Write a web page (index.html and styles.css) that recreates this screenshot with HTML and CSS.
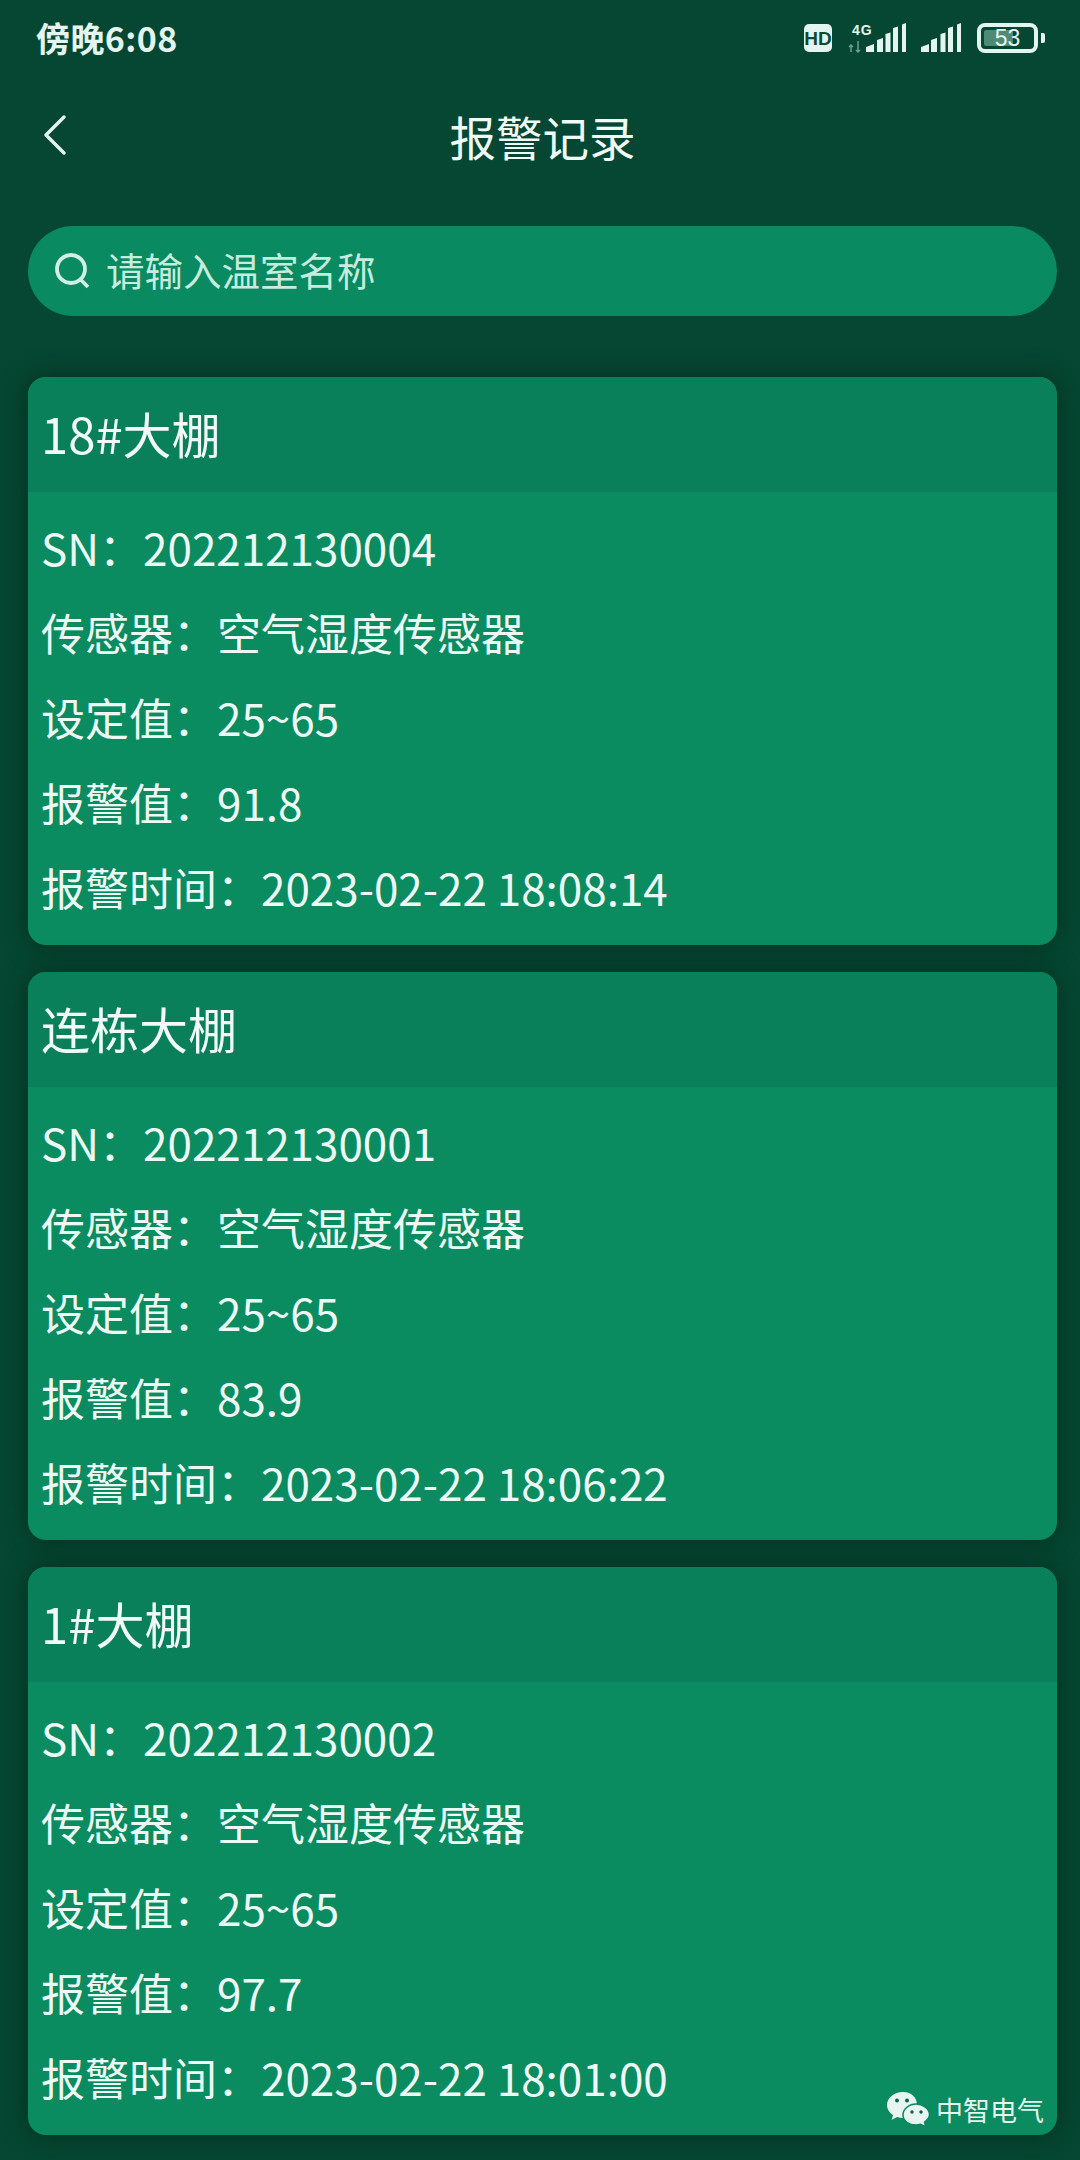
FILE: index.html
```html
<!DOCTYPE html>
<html lang="zh">
<head>
<meta charset="utf-8">
<title>报警记录</title>
<link rel="stylesheet" href="styles.css">
</head>
<body>
<div class="screen">
  <div class="status">
    <span class="clock">傍晚6:08</span>
    <div class="status-icons">
      <svg class="hd" width="28" height="28" viewBox="0 0 28 28"><rect width="28" height="28" rx="5" fill="#e3f5ee"/><text x="14" y="20.500" text-anchor="middle" class="hd-text">HD</text></svg>
      <svg class="sig4g" width="58" height="30" viewBox="0 0 58 30">
        <text x="3" y="12" class="g-text">4G</text>
        <path d="M2 22v7M0 24l2-2 2 2M9 18v11M7 27l2 2 2-2" stroke="#6f9d8c" stroke-width="1.500" fill="none"/>
        <path d="M17 29v-5l8-3v8zM28 29v-12l6-2v14zM36.500 29v-18l5-1.500V29zM44 29v-24l5-1.500V29zM53 29V1.500L57 0v29z" fill="#e3f5ee"/>
      </svg>
      <svg class="sig" width="41" height="30" viewBox="0 0 41 30">
        <path d="M0 29v-5l8-3v8zM10 29v-12l6-2v14zM19.500 29v-18l5-1.500V29zM27 29v-24l5-1.500V29zM36 29V1.500L40 0v29z" fill="#e3f5ee"/>
      </svg>
      <div class="battery">
        <div class="battery-body"><div class="battery-fill"></div><span class="battery-num">53</span></div>
        <div class="battery-cap"></div>
      </div>
    </div>
  </div>

  <div class="nav">
    <svg class="back" width="24" height="40" viewBox="0 0 24 40"><path d="M21 2 3 20l18 18" fill="none" stroke="#e3f5ee" stroke-width="3.400" stroke-linecap="round" stroke-linejoin="round"/></svg>
    <h1 class="nav-title">报警记录</h1>
  </div>

  <div class="search">
    <svg class="search-icon" width="36" height="36" viewBox="0 0 36 36"><circle cx="16" cy="16" r="14" fill="none" stroke="#d2efe5" stroke-width="3.800"/><path d="m25 26 8 8" stroke="#d2efe5" stroke-width="3.800"/></svg>
    <span class="search-text">请输入温室名称</span>
  </div>

  <div class="list">
    <section class="card">
      <h2 class="card-head">18#大棚</h2>
      <div class="card-body">
        <p class="row">SN：202212130004</p>
        <p class="row">传感器：空气湿度传感器</p>
        <p class="row">设定值：25~65</p>
        <p class="row">报警值：91.8</p>
        <p class="row">报警时间：2023-02-22 18:08:14</p>
      </div>
    </section>
    <section class="card">
      <h2 class="card-head">连栋大棚</h2>
      <div class="card-body">
        <p class="row">SN：202212130001</p>
        <p class="row">传感器：空气湿度传感器</p>
        <p class="row">设定值：25~65</p>
        <p class="row">报警值：83.9</p>
        <p class="row">报警时间：2023-02-22 18:06:22</p>
      </div>
    </section>
    <section class="card">
      <h2 class="card-head">1#大棚</h2>
      <div class="card-body">
        <p class="row">SN：202212130002</p>
        <p class="row">传感器：空气湿度传感器</p>
        <p class="row">设定值：25~65</p>
        <p class="row">报警值：97.7</p>
        <p class="row">报警时间：2023-02-22 18:01:00</p>
      </div>
    </section>
  </div>

  <div class="watermark">
    <svg class="wechat" width="44" height="36" viewBox="0 0 44 36">
      <path d="M17 1C8 1 1 7 1 14c0 4 2 7.500 6 10l-1.500 5L11 26c2 .6 4 1 6 1 9 0 14-6 14-13S26 1 17 1z" fill="#e6f5ef"/>
      <path d="M30 13c-7 0-13 5-13 11s6 10 13 10c1.500 0 3-.2 4.500-.7L40 36l-1.500-5c3-2 5-4.500 5-7.500C43.500 18 37 13 30 13z" fill="#e6f5ef" stroke="#0a8660" stroke-width="1.500"/>
      <circle cx="11" cy="9.500" r="1.900" fill="#0d5f48"/><circle cx="21" cy="9.500" r="1.900" fill="#0d5f48"/>
      <circle cx="26" cy="21" r="1.700" fill="#0d5f48"/><circle cx="35" cy="21" r="1.700" fill="#0d5f48"/>
    </svg>
    <span class="wm-text">中智电气</span>
  </div>
</div>
</body>
</html>
```
FILE: styles.css
```css
* { box-sizing: border-box; }
html, body { margin: 0; padding: 0; }
body {
  width: 1080px;
  height: 2160px;
  overflow: hidden;
  background: #054732;
  font-family: "Noto Sans CJK SC", "Noto Sans", sans-serif;
  color: #e8f8f2;
}
.screen {
  position: relative;
  width: 1080px;
  height: 2160px;
  overflow: hidden;
  padding: 0 23px 0 28px;
}
.status {
  height: 76px;
  margin: 0 -23px 0 -28px;
  padding: 0 35px 0 36px;
  display: flex;
  align-items: center;
  justify-content: space-between;
}
.clock { font-size: 34px; font-weight: 700; color: #e3f5ee; line-height: 1; letter-spacing: .4px; }
.status-icons { display: flex; align-items: center; }
.hd { margin-right: 17px; }
.hd-text { font: 700 19px "Liberation Sans", sans-serif; fill: #0d4a36; }
.sig4g { margin-right: 14px; overflow: visible; }
.g-text { font: 700 14px "Liberation Sans", sans-serif; fill: #e3f5ee; letter-spacing: 1px; }
.sig { margin-right: 15px; }
.battery { display: flex; align-items: center; gap: 3px; }
.battery-body {
  position: relative;
  width: 61px;
  height: 30px;
  border: 4px solid #e3f5ee;
  border-radius: 8px;
  display: flex;
  align-items: center;
  justify-content: center;
}
.battery-fill {
  position: absolute;
  left: 3px;
  top: 3px;
  bottom: 3px;
  width: 29px;
  border-radius: 2px;
  background: #4f8a75;
}
.battery-num {
  position: relative;
  font: 400 23px "Liberation Sans", sans-serif;
  color: #e3f5ee;
  line-height: 1;
}
.battery-cap { width: 4px; height: 10px; border-radius: 0 2px 2px 0; background: #e3f5ee; }
.nav {
  position: relative;
  height: 100px;
  margin-top: 10px;
  display: flex;
  align-items: center;
  justify-content: center;
}
.back { position: absolute; left: 15px; top: 29px; }
.nav-title {
  margin: 0;
  font-size: 46.500px;
  font-weight: 400;
  line-height: 1;
  color: #f0faf6;
}
.search {
  height: 90px;
  margin-top: 40px;
  border-radius: 45px;
  background: #0a8a60;
  display: flex;
  align-items: center;
  padding-left: 27px;
  gap: 15px;
}
.search-text { font-size: 38.500px; color: #c5ecdf; line-height: 1; transform: translateY(-2px); }
.list {
  margin-top: 61px;
  display: flex;
  flex-direction: column;
  gap: 27px;
}
.card {
  height: 568px;
  border-radius: 18px;
  background: #0a8b60;
  box-shadow: 0 0 26px rgba(0, 30, 20, .55);
  overflow: hidden;
}
.card-head {
  margin: 0;
  height: 115px;
  padding: 0 0 4px 13px;
  display: flex;
  align-items: center;
  font-size: 49px;
  font-weight: 400;
  line-height: 1;
  color: #f0faf6;
  background: #0a805a;
}
.card-body { padding: 12px 13px 0; }
.row {
  margin: 0;
  height: 85px;
  display: flex;
  align-items: center;
  font-size: 44px;
  line-height: 1;
  white-space: nowrap;
  color: #ecf9f4;
}
.watermark {
  position: absolute;
  left: 886px;
  top: 2091px;
  display: flex;
  align-items: center;
  gap: 6px;
}
.wm-text { font-size: 27px; line-height: 1; color: #e6f5ef; }
```
